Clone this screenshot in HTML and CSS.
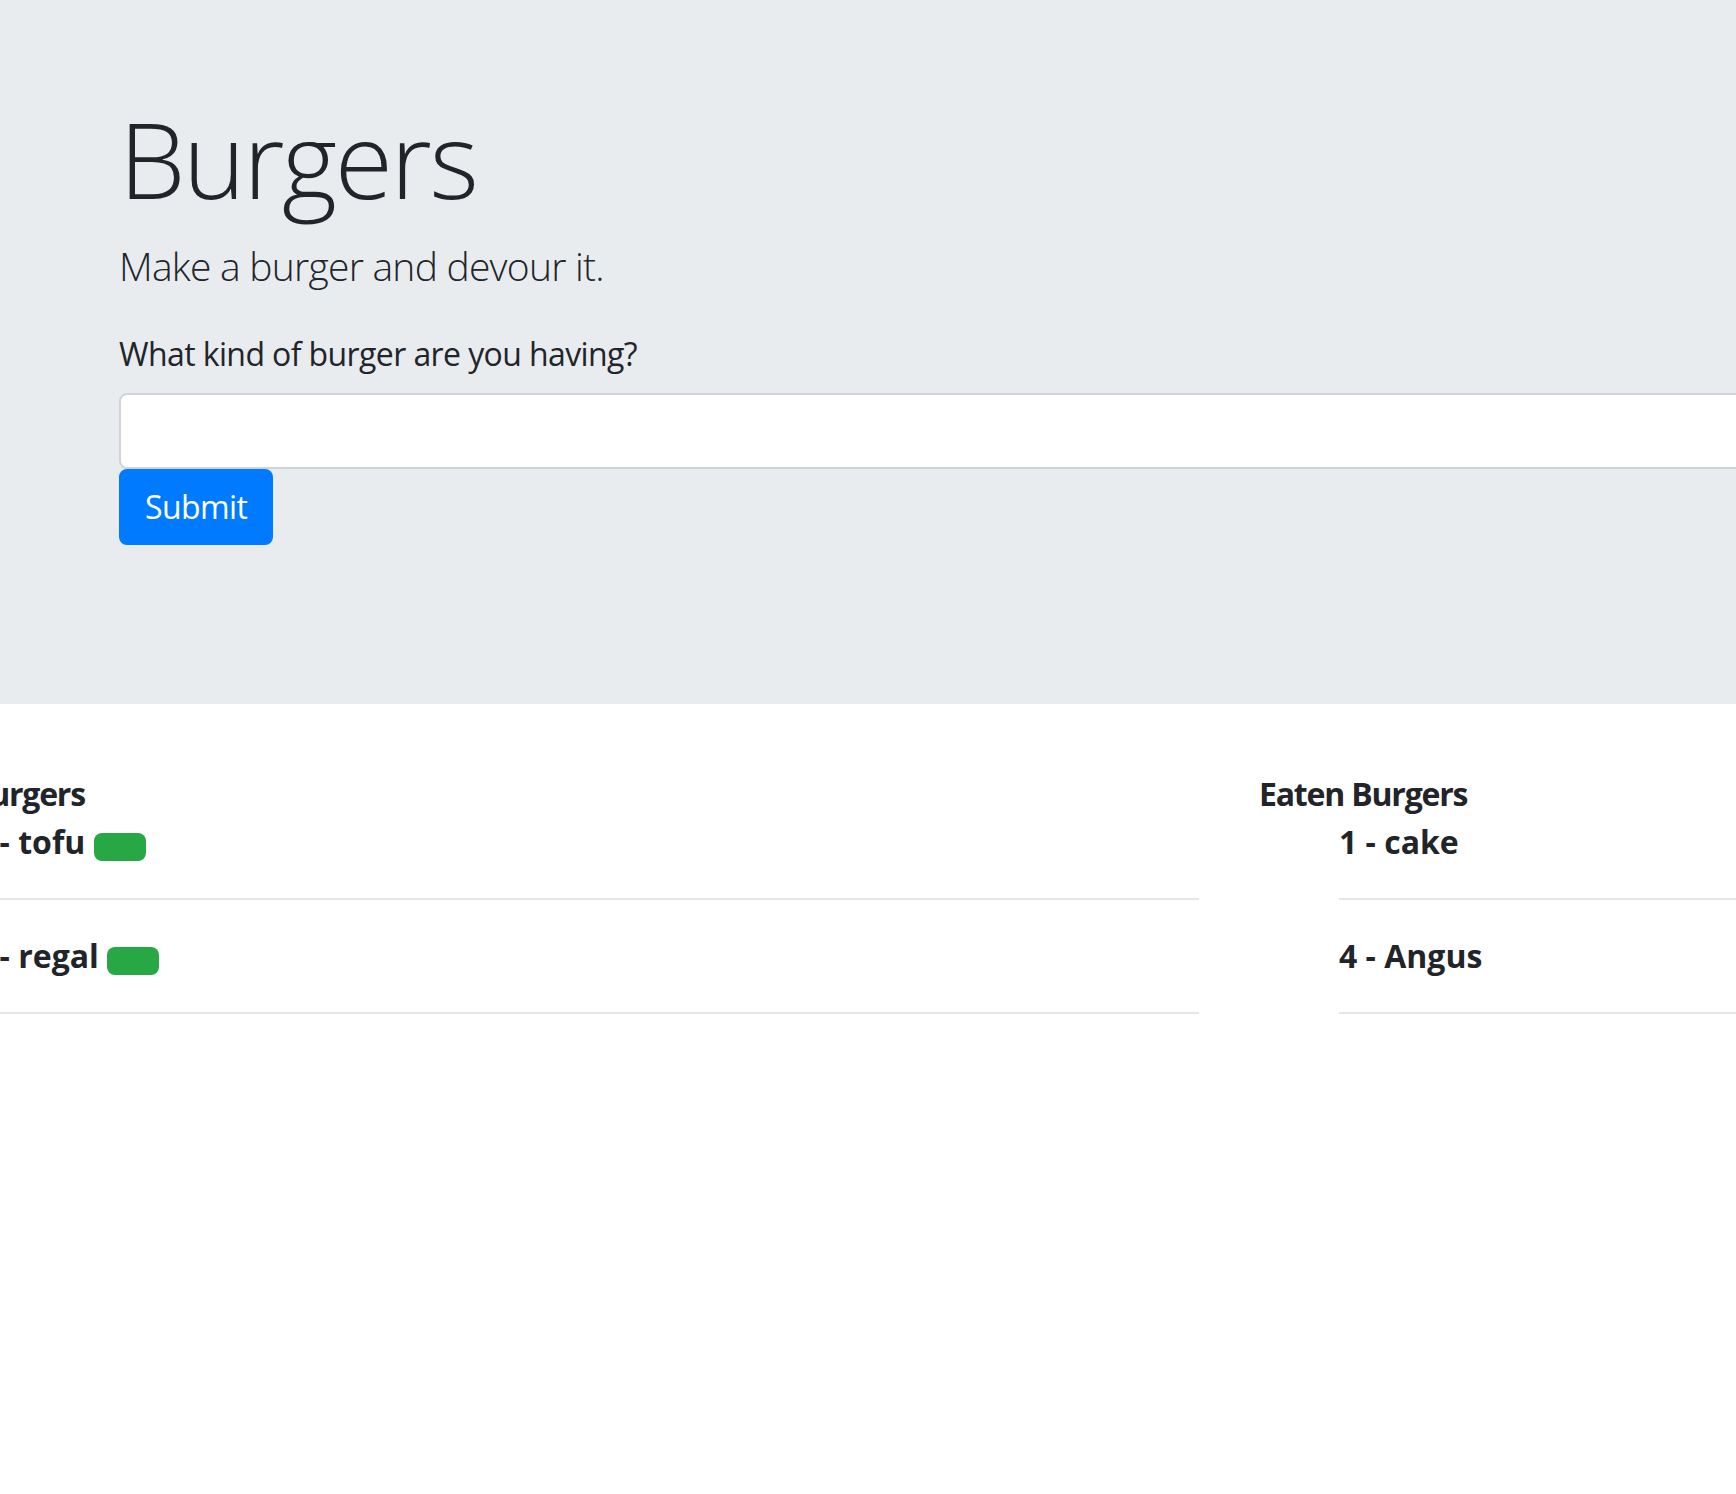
FILE: index.html
```html
<!DOCTYPE html>
<html lang="en">
<head>
<meta charset="utf-8">
<title>Burgers</title>
<link rel="stylesheet" href="styles.css">
</head>
<body>
<header class="jumbotron">
  <div class="container">
    <h1 class="display">Burgers</h1>
    <p class="lead">Make a burger and devour it.</p>
    <form class="burger-form">
      <label class="form-label" for="burger">What kind of burger are you having?</label>
      <input class="form-input" id="burger" type="text">
      <button class="btn-submit" type="submit">Submit</button>
    </form>
  </div>
</header>
<main class="lists">
  <section class="col">
    <h5 class="col-title">New Burgers</h5>
    <ul class="burger-list">
      <li class="burger-item"><p class="burger-name">2 - tofu <span class="badge"></span></p><hr class="rule"></li>
      <li class="burger-item"><p class="burger-name">3 - regal <span class="badge"></span></p><hr class="rule"></li>
    </ul>
  </section>
  <section class="col">
    <h5 class="col-title">Eaten Burgers</h5>
    <ul class="burger-list">
      <li class="burger-item"><p class="burger-name">1 - cake</p><hr class="rule"></li>
      <li class="burger-item"><p class="burger-name">4 - Angus</p><hr class="rule"></li>
    </ul>
  </section>
</main>
</body>
</html>
```
FILE: styles.css
```css
html, body {
  margin: 0;
  padding: 0;
}
body {
  overflow: hidden;
  font-family: "Open Sans", "Noto Sans", sans-serif;
  color: #212529;
  background: #fff;
  font-size: 32px;
  line-height: 48px;
}
.jumbotron {
  background: #e9ecef;
  height: 704px;
  box-sizing: border-box;
  padding-top: 92px;
}
.container {
  padding-left: 119px;
}
.display {
  margin: 0 0 12px;
  font-size: 106px;
  line-height: 132px;
  font-weight: 300;
  letter-spacing: -2.4px;
}
.lead {
  margin: 0 0 34px;
  font-size: 39px;
  line-height: 60px;
  font-weight: 300;
  letter-spacing: -0.75px;
}
.burger-form {
  display: flex;
  flex-direction: column;
  align-items: flex-start;
}
.form-label {
  display: block;
  margin-bottom: 15px;
  letter-spacing: -0.6px;
}
.form-input {
  box-sizing: border-box;
  width: 1700px;
  height: 76px;
  border: 2px solid #ced4da;
  border-radius: 8px;
  background: #fff;
  margin: 0;
  font: inherit;
}
.btn-submit {
  box-sizing: border-box;
  height: 76px;
  padding: 0 24px;
  border: 2px solid #007bff;
  background: #007bff;
  color: #fff;
  border-radius: 8px;
  font-family: inherit;
  font-size: 32px;
  line-height: 48px;
  letter-spacing: -0.6px;
  margin: 0;
}
.lists {
  display: flex;
  gap: 60px;
  margin-left: -107px;
  margin-top: 66px;
}
.col {
  flex: 0 0 1306px;
}
.col-title {
  margin: 0;
  font-size: 32px;
  line-height: 48px;
  font-weight: 700;
  letter-spacing: -1.2px;
}
.burger-list {
  list-style: none;
  margin: 0;
  padding-left: 80px;
}
.burger-name {
  margin: 0;
  font-weight: 700;
}
.badge {
  display: inline-block;
  width: 52px;
  height: 28px;
  margin-left: 0;
  border-radius: 8px;
  background: #28a745;
  vertical-align: -7px;
}
.rule {
  margin: 32px 0;
  border: 0;
  border-top: 2px solid #e6e6e6;
  height: 0;
}
```
